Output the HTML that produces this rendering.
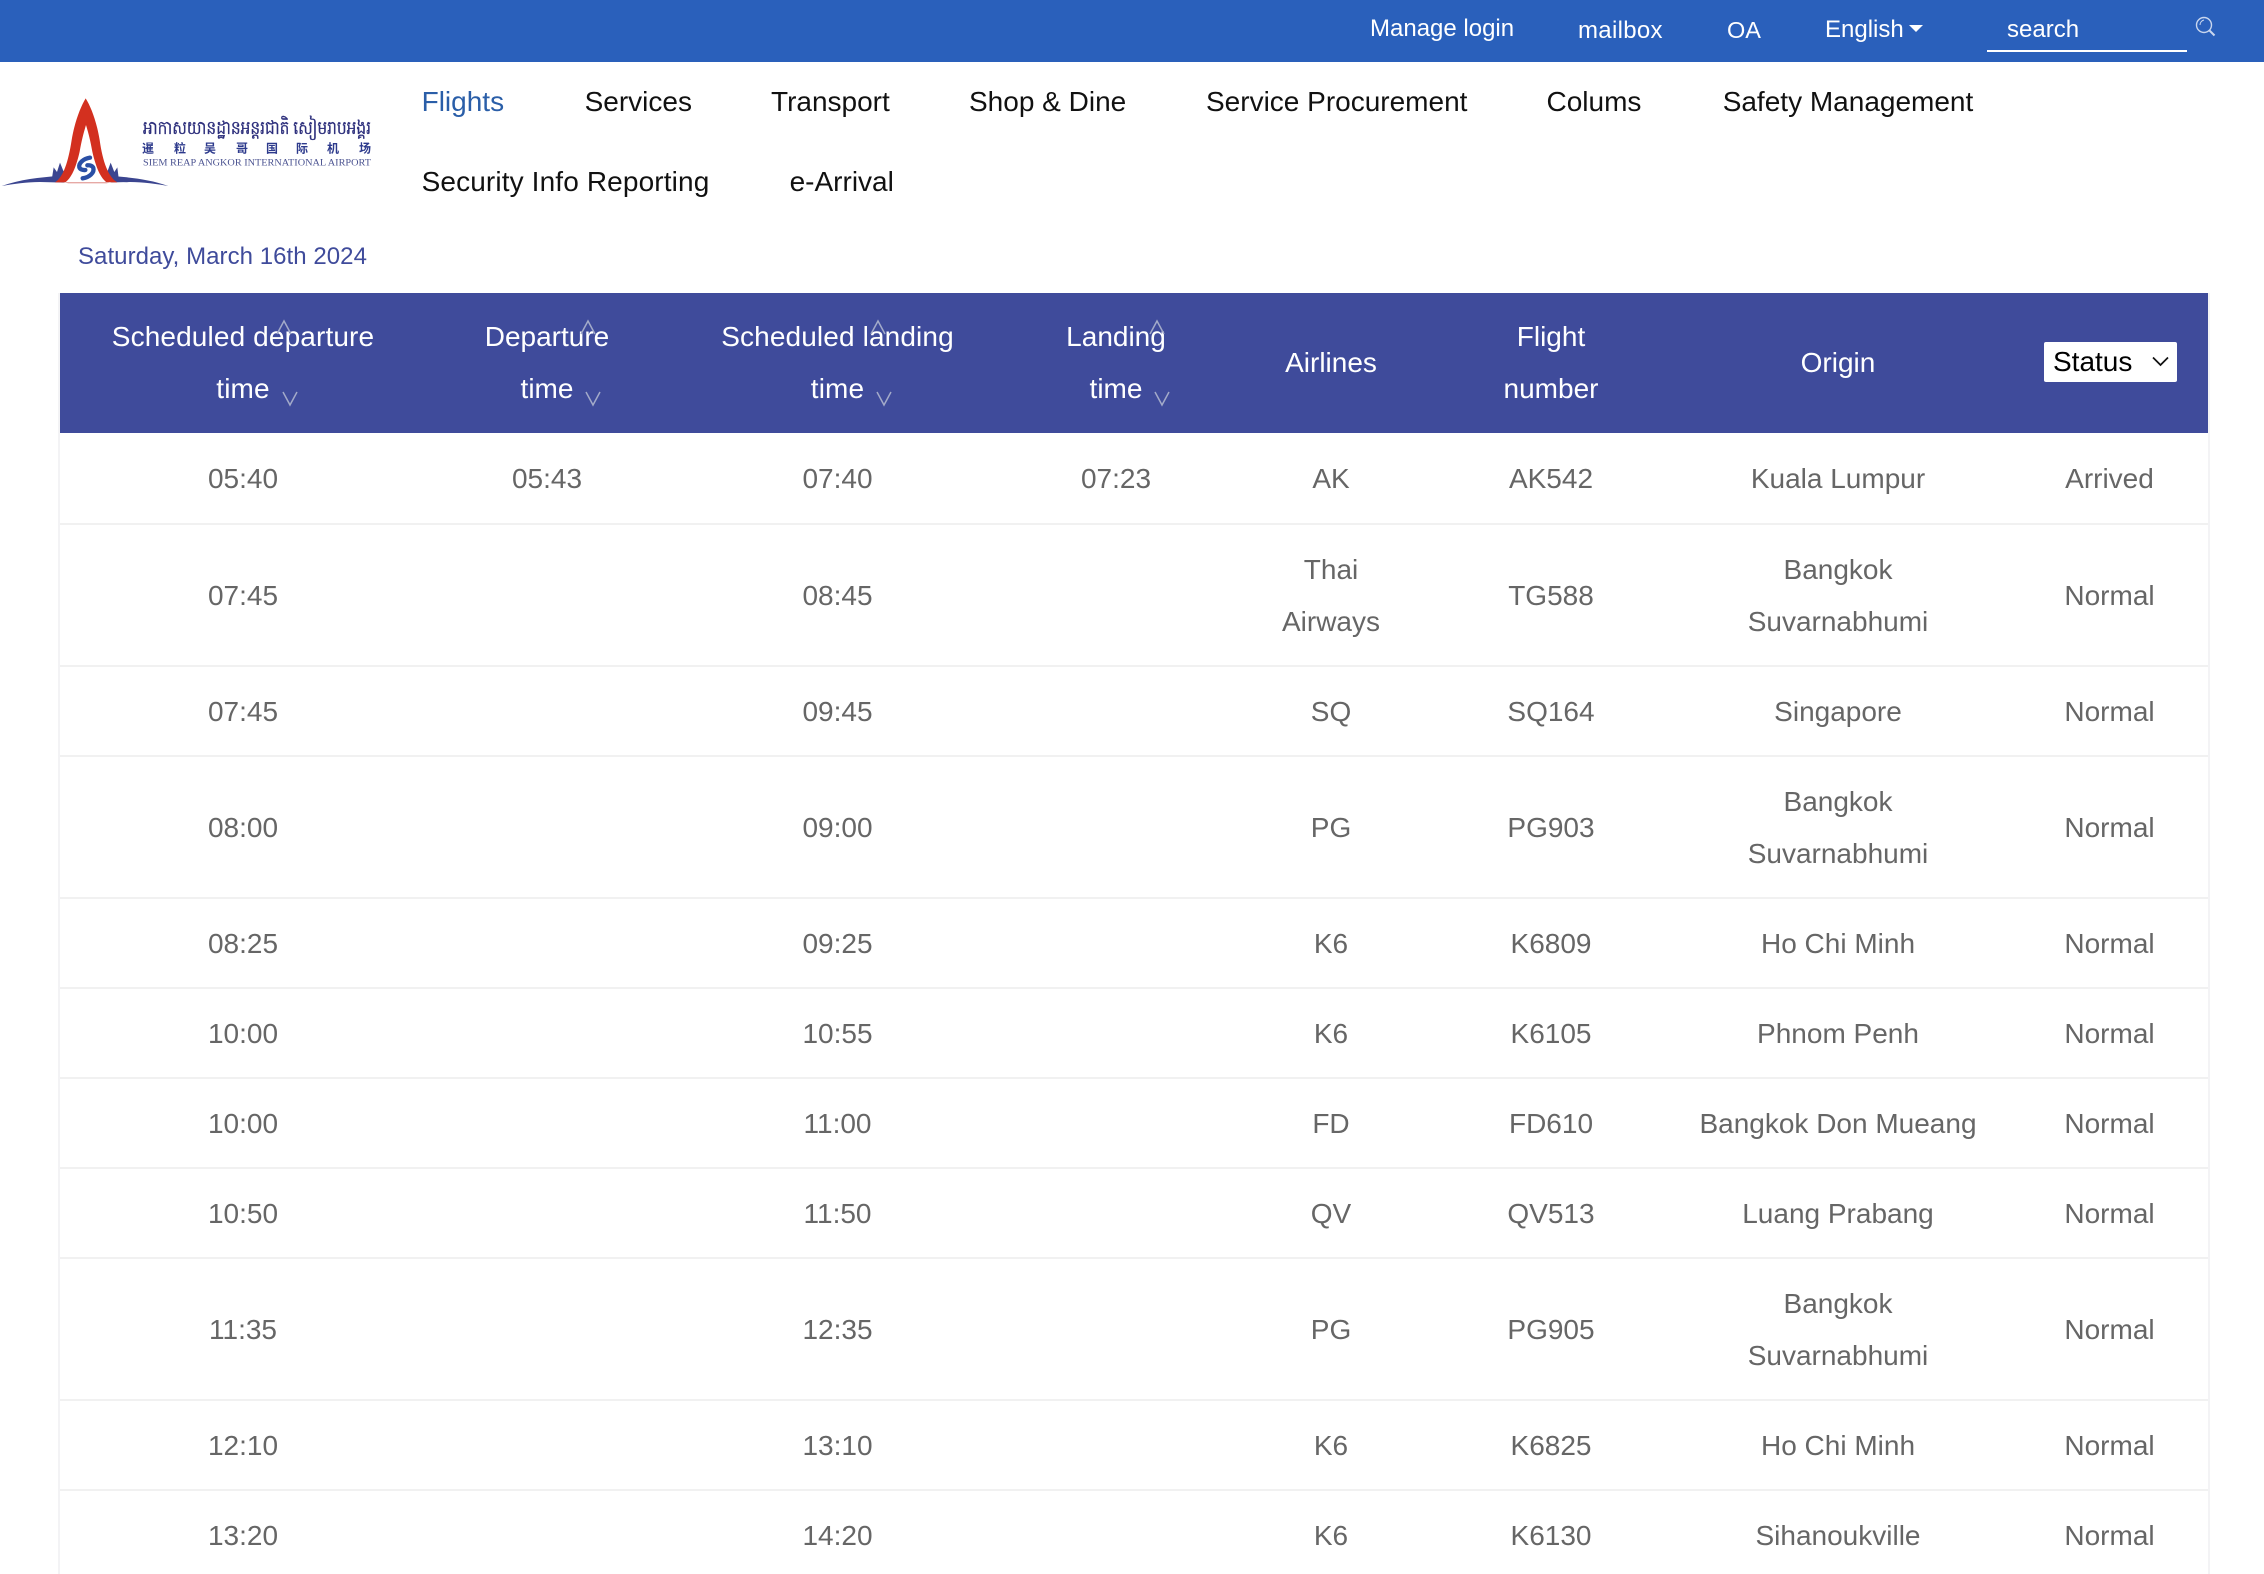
<!DOCTYPE html>
<html lang="en">
<head>
<meta charset="utf-8">
<title>Siem Reap Angkor International Airport - Flights</title>
<style>
*{box-sizing:border-box}
html{margin:0;padding:0;height:1574px;overflow:hidden;background:#fff}
body{margin:0;padding:0;background:#fff;position:relative;width:2264px;height:1574px;overflow:hidden;font-family:"Liberation Sans",Arial,sans-serif;font-size:28px;color:#666}
a{text-decoration:none;color:inherit}
.top{position:absolute;left:0;top:0;width:2264px;height:62px;background:#2a60bb}
.top span{position:absolute;color:#fff;font-size:24px;line-height:30px;white-space:nowrap}
.caret{position:absolute;left:1909px;top:25px;width:0;height:0;border-left:7px solid transparent;border-right:7px solid transparent;border-top:7px solid #fff}
.sline{position:absolute;left:1987px;top:50px;width:200px;height:2px;background:#fff}
.logo{position:absolute;left:0;top:90px}
.nav{position:absolute;left:0;top:0;margin:0;padding:0;list-style:none;line-height:80px;color:#111}
.nav li{position:absolute;white-space:nowrap;top:62px}
.nav li.r2{top:142px}
.nav li.on{color:#2a5ea8}
.date{position:absolute;left:78px;top:242px;font-size:24px;line-height:30px;color:#3f4b9b;white-space:nowrap;letter-spacing:.05px}
.wrap{position:absolute;left:58px;top:293px;width:2152px;height:1281px;overflow:hidden;border-left:2px solid #f3f3f5;border-right:2px solid #f3f3f5}
table{border-collapse:separate;border-spacing:0;table-layout:fixed;width:2148px;line-height:52px;text-align:center}
th{background:#3f4b9b;color:#fff;font-weight:400;height:140px;padding:0}
th.w{letter-spacing:.13px}
td{padding:1px 0 0;height:90px;border-bottom:2px solid #f1f1f1}
tr.d td{height:142px}
tr.f td{height:92px}
.sel{position:relative;display:block;width:133px;height:40px;margin-left:33px;top:-1px}
.sel select{appearance:none;-webkit-appearance:none;display:block;width:133px;height:40px;border:0;border-radius:2px;background:#fff;color:#000;font:28px/40px "Liberation Sans",Arial,sans-serif;padding:0 0 0 9px;margin:0}
.sel svg{position:absolute;left:108px;top:14px;pointer-events:none}
.sort{position:absolute;width:16px;height:16px;overflow:visible}
</style>
</head>
<body>
<div class="top">
  <span style="left:1370px;top:14px">Manage login</span>
  <span style="left:1578px;top:16px;letter-spacing:.3px">mailbox</span>
  <span style="left:1727px;top:15px;font-size:23.5px">OA</span>
  <span style="left:1825px;top:15px">English</span>
  <i class="caret"></i>
  <span style="left:2007px;top:15px">search</span>
  <i class="sline"></i>
  <svg style="position:absolute;left:2194px;top:15px" width="24" height="24" viewBox="0 0 24 24" fill="none" stroke="#c9d6ee" stroke-width="1.4"><circle cx="10" cy="10" r="7.5"/><path d="M10 5a5 5 0 0 0-4 5" stroke-width="1"/><path d="M15.5 15.5l5 5" stroke-width="2"/></svg>
</div>

<svg class="logo" width="380" height="110" viewBox="0 0 380 110">
  <g transform="scale(.3333)">
    <path d="M5 288C60 268 120 262 175 258L195 278L120 276C80 276 40 282 5 288Z" fill="#3b4590"/>
    <path d="M505 288C450 268 390 262 335 258L315 278L390 276C430 276 470 282 505 288Z" fill="#3b4590"/>
    <path d="M156 264L161 232L171 246L180 218L189 240L200 264Z" fill="#3b4590"/>
    <path d="M356 264L352 232L343 246L332 218L324 240L312 264Z" fill="#3b4590"/>
    <path d="M165 277C190 262 205 215 215 150C224 95 242 50 257 25C273 50 290 95 299 150C308 215 325 262 352 277L320 277C298 262 285 220 277 185C271 150 264 125 258 105C252 125 245 150 239 185C231 220 218 262 196 277Z" fill="#d3301f"/>
    <path d="M190 276H335L320 280H205Z" fill="#e6a9a5"/>
    <g fill="none" stroke="#2a4fa5" stroke-width="13" stroke-linecap="round">
      <path d="M270 203C250 206 235 220 238 232C240 238 248 241 256 240"/>
      <path d="M248 265C268 262 284 248 280 234C278 228 270 225 262 226"/>
    </g>
  </g>
  <text x="143" y="44" font-family="'Liberation Serif','Noto Serif CJK SC',serif" font-size="19" fill="#2d2f7c" stroke="#2d2f7c" stroke-width=".25" textLength="228" lengthAdjust="spacingAndGlyphs">អាកាសយានដ្ឋានអន្តរជាតិ សៀមរាបអង្គរ</text>
  <g font-family="'Noto Sans CJK SC','WenQuanYi Zen Hei',sans-serif" font-size="12" font-weight="700" fill="#2d3a8c" text-anchor="middle">
    <text x="148" y="62.5">暹</text><text x="180" y="62.5">粒</text><text x="210" y="62.5">吴</text><text x="242" y="62.5">哥</text><text x="272" y="62.5">国</text><text x="302" y="62.5">际</text><text x="333" y="62.5">机</text><text x="365" y="62.5">场</text>
  </g>
  <text x="143" y="75.5" font-family="'Liberation Serif',serif" font-size="9.6" fill="#4a5290" textLength="228" lengthAdjust="spacingAndGlyphs">SIEM REAP ANGKOR INTERNATIONAL AIRPORT</text>
</svg>

<ul class="nav">
  <li class="on" style="left:421.6px"><a href="#">Flights</a></li>
  <li style="left:584.6px"><a href="#">Services</a></li>
  <li style="left:771px"><a href="#">Transport</a></li>
  <li style="left:969px"><a href="#">Shop &amp; Dine</a></li>
  <li style="left:1206px"><a href="#">Service Procurement</a></li>
  <li style="left:1546.5px"><a href="#">Colums</a></li>
  <li style="left:1722.7px"><a href="#">Safety Management</a></li>
  <li class="r2" style="left:421.6px;letter-spacing:.13px"><a href="#">Security Info Reporting</a></li>
  <li class="r2" style="left:789.6px"><a href="#">e-Arrival</a></li>
</ul>

<div class="date">Saturday, March 16th 2024</div>

<div class="wrap">
<table>
  <colgroup><col style="width:366px"><col style="width:242px"><col style="width:339px"><col style="width:218px"><col style="width:212px"><col style="width:228px"><col style="width:346px"><col style="width:197px"></colgroup>
  <thead><tr>
    <th class="w">Scheduled departure<br>time</th><th>Departure<br>time</th><th class="w">Scheduled landing<br>time</th><th>Landing<br>time</th><th>Airlines</th><th>Flight<br>number</th><th>Origin</th>
    <th><span class="sel"><select><option>Status</option></select><svg width="17" height="11" viewBox="0 0 17 11" fill="none" stroke="#111" stroke-width="1.7"><path d="M1 1.5l7.5 7.5L16 1.5"/></svg></span></th>
  </tr></thead>
  <tbody>
    <tr class="f"><td>05:40</td><td>05:43</td><td>07:40</td><td>07:23</td><td>AK</td><td>AK542</td><td>Kuala Lumpur</td><td>Arrived</td></tr>
    <tr class="d"><td>07:45</td><td></td><td>08:45</td><td></td><td>Thai<br>Airways</td><td>TG588</td><td>Bangkok<br>Suvarnabhumi</td><td>Normal</td></tr>
    <tr><td>07:45</td><td></td><td>09:45</td><td></td><td>SQ</td><td>SQ164</td><td>Singapore</td><td>Normal</td></tr>
    <tr class="d"><td>08:00</td><td></td><td>09:00</td><td></td><td>PG</td><td>PG903</td><td>Bangkok<br>Suvarnabhumi</td><td>Normal</td></tr>
    <tr><td>08:25</td><td></td><td>09:25</td><td></td><td>K6</td><td>K6809</td><td>Ho Chi Minh</td><td>Normal</td></tr>
    <tr><td>10:00</td><td></td><td>10:55</td><td></td><td>K6</td><td>K6105</td><td>Phnom Penh</td><td>Normal</td></tr>
    <tr><td>10:00</td><td></td><td>11:00</td><td></td><td>FD</td><td>FD610</td><td>Bangkok Don Mueang</td><td>Normal</td></tr>
    <tr><td>10:50</td><td></td><td>11:50</td><td></td><td>QV</td><td>QV513</td><td>Luang Prabang</td><td>Normal</td></tr>
    <tr class="d"><td>11:35</td><td></td><td>12:35</td><td></td><td>PG</td><td>PG905</td><td>Bangkok<br>Suvarnabhumi</td><td>Normal</td></tr>
    <tr><td>12:10</td><td></td><td>13:10</td><td></td><td>K6</td><td>K6825</td><td>Ho Chi Minh</td><td>Normal</td></tr>
    <tr><td>13:20</td><td></td><td>14:20</td><td></td><td>K6</td><td>K6130</td><td>Sihanoukville</td><td>Normal</td></tr>
  </tbody>
</table>
</div>

<svg class="sort" style="left:276px;top:320px" viewBox="0 0 16 16" fill="none" stroke="#a3aac9" stroke-width="1.5"><path d="M1 14L8 1l7 13"/></svg>
<svg class="sort" style="left:580px;top:320px" viewBox="0 0 16 16" fill="none" stroke="#a3aac9" stroke-width="1.5"><path d="M1 14L8 1l7 13"/></svg>
<svg class="sort" style="left:870px;top:320px" viewBox="0 0 16 16" fill="none" stroke="#a3aac9" stroke-width="1.5"><path d="M1 14L8 1l7 13"/></svg>
<svg class="sort" style="left:1149px;top:320px" viewBox="0 0 16 16" fill="none" stroke="#a3aac9" stroke-width="1.5"><path d="M1 14L8 1l7 13"/></svg>
<svg class="sort" style="left:282px;top:390px" viewBox="0 0 16 16" fill="none" stroke="#a3aac9" stroke-width="1.5"><path d="M1 2l7 13 7-13"/></svg>
<svg class="sort" style="left:585px;top:390px" viewBox="0 0 16 16" fill="none" stroke="#a3aac9" stroke-width="1.5"><path d="M1 2l7 13 7-13"/></svg>
<svg class="sort" style="left:876px;top:390px" viewBox="0 0 16 16" fill="none" stroke="#a3aac9" stroke-width="1.5"><path d="M1 2l7 13 7-13"/></svg>
<svg class="sort" style="left:1154px;top:390px" viewBox="0 0 16 16" fill="none" stroke="#a3aac9" stroke-width="1.5"><path d="M1 2l7 13 7-13"/></svg>
</body>
</html>
